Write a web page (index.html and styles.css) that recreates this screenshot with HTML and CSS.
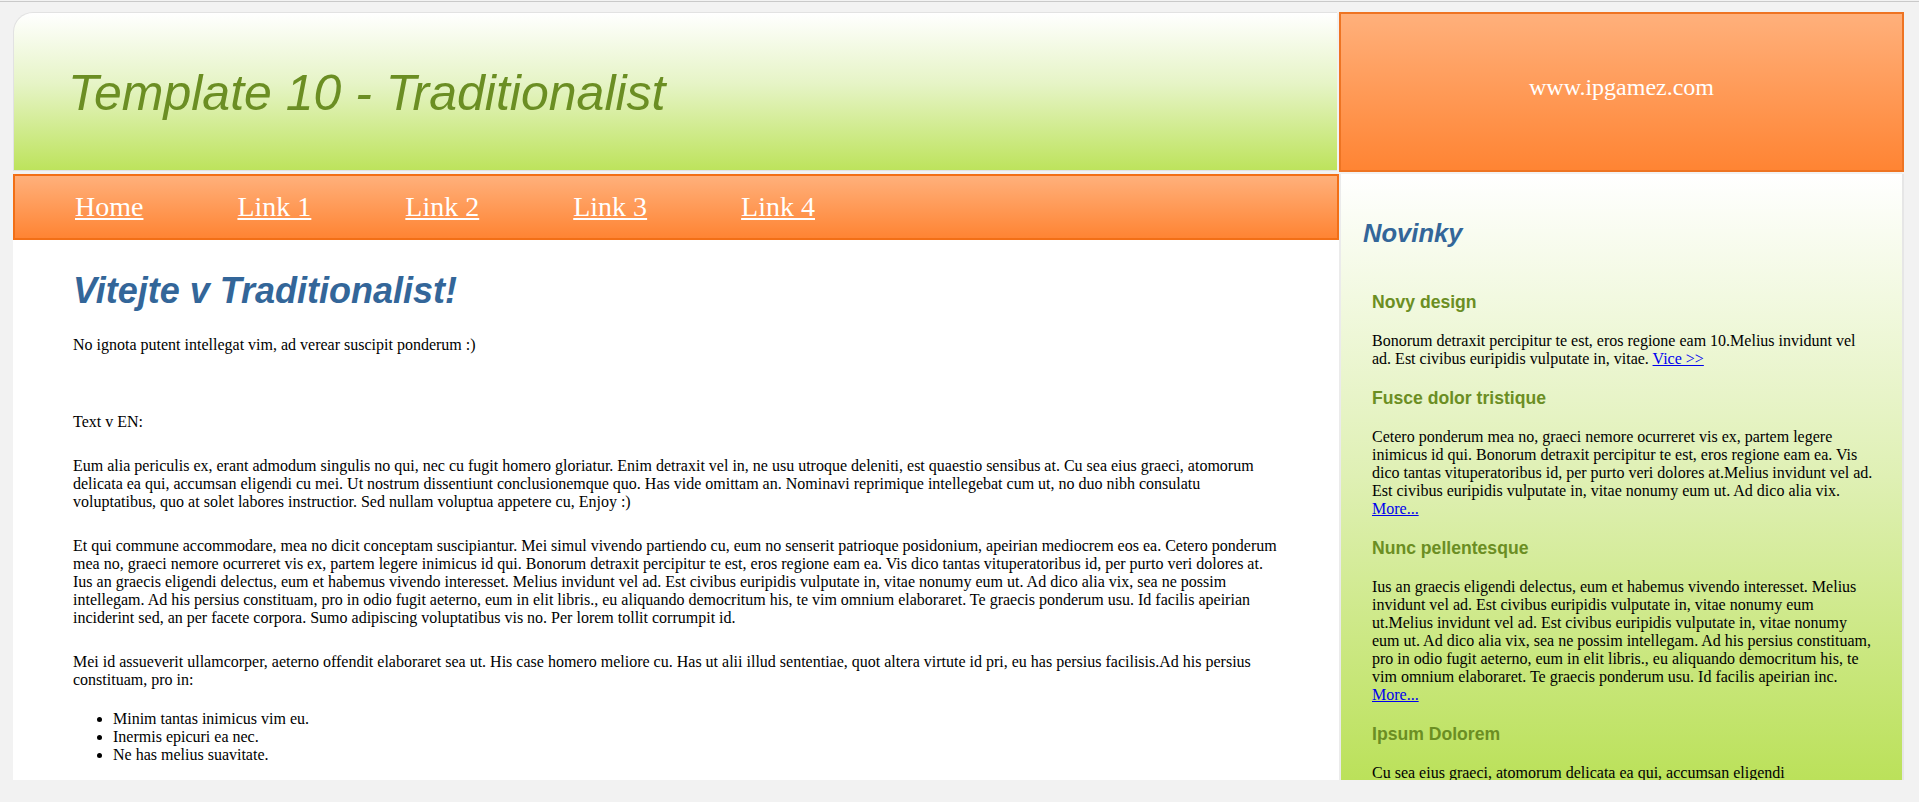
FILE: index.html
```html
<!DOCTYPE html>
<html lang="cs">
<head>
<meta charset="utf-8">
<title>Template 10 - Traditionalist</title>
<link rel="stylesheet" href="styles.css">
</head>
<body>
<div class="frame">
  <div class="page">
    <div class="top">
      <div class="header"><h1 class="site-title">Template 10 - Traditionalist</h1></div>
      <div class="sitebox">www.ipgamez.com</div>
    </div>
    <div class="bottom">
      <div class="left">
        <nav class="nav">
          <a href="#">Home</a>
          <a href="#">Link 1</a>
          <a href="#">Link 2</a>
          <a href="#">Link 3</a>
          <a href="#">Link 4</a>
        </nav>
        <div class="main">
          <h2 class="welcome">Vitejte v Traditionalist!</h2>
          <p class="intro">No ignota putent intellegat vim, ad verear suscipit ponderum :)</p>
          <p>Text v EN:</p>
          <p>Eum alia periculis ex, erant admodum singulis no qui, nec cu fugit homero gloriatur. Enim detraxit vel in, ne usu utroque deleniti, est quaestio sensibus at. Cu sea eius graeci, atomorum<br>delicata ea qui, accumsan eligendi cu mei. Ut nostrum dissentiunt conclusionemque quo. Has vide omittam an. Nominavi reprimique intellegebat cum ut, no duo nibh consulatu<br>voluptatibus, quo at solet labores instructior. Sed nullam voluptua appetere cu, Enjoy :)</p>
          <p>Et qui commune accommodare, mea no dicit conceptam suscipiantur. Mei simul vivendo partiendo cu, eum no senserit patrioque posidonium, apeirian mediocrem eos ea. Cetero ponderum<br>mea no, graeci nemore ocurreret vis ex, partem legere inimicus id qui. Bonorum detraxit percipitur te est, eros regione eam ea. Vis dico tantas vituperatoribus id, per purto veri dolores at.<br>Ius an graecis eligendi delectus, eum et habemus vivendo interesset. Melius invidunt vel ad. Est civibus euripidis vulputate in, vitae nonumy eum ut. Ad dico alia vix, sea ne possim<br>intellegam. Ad his persius constituam, pro in odio fugit aeterno, eum in elit libris., eu aliquando democritum his, te vim omnium elaboraret. Te graecis ponderum usu. Id facilis apeirian<br>inciderint sed, an per facete corpora. Sumo adipiscing voluptatibus vis no. Per lorem tollit corrumpit id.</p>
          <p class="lead-in">Mei id assueverit ullamcorper, aeterno offendit elaboraret sea ut. His case homero meliore cu. Has ut alii illud sententiae, quot altera virtute id pri, eu has persius facilisis.Ad his persius<br>constituam, pro in:</p>
          <ul class="list">
            <li>Minim tantas inimicus vim eu.</li>
            <li>Inermis epicuri ea nec.</li>
            <li>Ne has melius suavitate.</li>
          </ul>
        </div>
      </div>
      <aside class="sidebar">
        <h2 class="side-title">Novinky</h2>
        <div class="news">
          <h3>Novy design</h3>
          <p>Bonorum detraxit percipitur te est, eros regione eam 10.Melius invidunt vel ad. Est civibus euripidis vulputate in, vitae. <a href="#">Vice &gt;&gt;</a></p>
          <h3>Fusce dolor tristique</h3>
          <p>Cetero ponderum mea no, graeci nemore ocurreret vis ex, partem legere inimicus id qui. Bonorum detraxit percipitur te est, eros regione eam ea. Vis dico tantas vituperatoribus id, per purto veri dolores at.Melius invidunt vel ad. Est civibus euripidis vulputate in, vitae nonumy eum ut. Ad dico alia vix.<br><a href="#">More...</a></p>
          <h3>Nunc pellentesque</h3>
          <p>Ius an graecis eligendi delectus, eum et habemus vivendo interesset. Melius invidunt vel ad. Est civibus euripidis vulputate in, vitae nonumy eum ut.Melius invidunt vel ad. Est civibus euripidis vulputate in, vitae nonumy eum ut. Ad dico alia vix, sea ne possim intellegam. Ad his persius constituam, pro in odio fugit aeterno, eum in elit libris., eu aliquando democritum his, te vim omnium elaboraret. Te graecis ponderum usu. Id facilis apeirian inc.<br><a href="#">More...</a></p>
          <h3>Ipsum Dolorem</h3>
          <p>Cu sea eius graeci, atomorum delicata ea qui, accumsan eligendi<br>cu mei. Ut nostrum dissentiunt conclusionemque quo. Has vide omittam an.</p>
        </div>
      </aside>
    </div>
  </div>
</div>
</body>
</html>
```
FILE: styles.css
```css
html, body {
  margin: 0;
  padding: 0;
  background: #f2f2f2;
}
body {
  padding-top: 1px;
  font-family: "Liberation Serif", "Times New Roman", serif;
  font-size: 16px;
  color: #000;
}
.frame {
  border-top: 1px solid #c9c9c9;
  padding: 10px 15px 0 13px;
}
.page {
  width: 1891px;
}
.top {
  display: flex;
  height: 160px;
}
.header {
  box-sizing: border-box;
  width: 1324px;
  height: 159px;
  margin-right: 2px;
  border: 1px solid #e2e2e2;
  border-right: none;
  border-radius: 20px 0 0 0;
  background: linear-gradient(to bottom, #ffffff 0%, #e6f4c6 45%, #bde35c 100%);
  padding: 52px 0 0 54px;
}
.site-title {
  margin: 0;
  font-family: "Liberation Sans", Arial, sans-serif;
  font-size: 50px;
  line-height: 57px;
  font-weight: normal;
  font-style: italic;
  color: #6b8e23;
}
.sitebox {
  box-sizing: border-box;
  width: 565px;
  height: 160px;
  border: 2px solid #ee7423;
  background: linear-gradient(to bottom, #ffb07b 0%, #ff8433 100%);
  color: #fff;
  font-size: 24px;
  line-height: 28px;
  text-align: center;
  padding-top: 59px;
}
.bottom {
  display: flex;
  margin-top: 2px;
  height: 606px;
}
.left {
  width: 1326px;
  display: flex;
  flex-direction: column;
}
.nav {
  box-sizing: border-box;
  height: 66px;
  border: 2px solid #f26f16;
  background: linear-gradient(to bottom, #ffb07b 0%, #ff8433 100%);
  display: flex;
  gap: 94px;
  padding: 15px 0 0 60px;
  line-height: 32px;
}
.nav a {
  color: #fff;
  font-size: 28px;
  text-decoration: underline;
}
.main {
  flex: 1;
  background: #fff;
  padding: 30px 36px 0 60px;
  overflow: hidden;
}
.welcome {
  margin: 0 0 25px;
  font-family: "Liberation Sans", Arial, sans-serif;
  font-size: 36px;
  line-height: 41px;
  font-weight: bold;
  font-style: italic;
  color: #336699;
}
.main p {
  margin: 0 0 26px;
  line-height: 18px;
}
.main p.intro {
  margin-bottom: 59px;
}
.main p.lead-in {
  margin-bottom: 21px;
}
.list {
  margin: 0;
  padding-left: 40px;
  line-height: 18px;
}
.sidebar {
  box-sizing: border-box;
  width: 565px;
  height: 606px;
  overflow: hidden;
  border-left: 2px solid #ebebeb;
  border-right: 2px solid #e6e6e6;
  background: linear-gradient(to bottom, #ffffff 0%, #dff0b4 50%, #bbe15a 100%);
  padding: 45px 27px 0 22px;
}
.side-title {
  margin: 0 0 44px;
  font-family: "Liberation Sans", Arial, sans-serif;
  font-size: 25.6px;
  line-height: 29px;
  font-weight: bold;
  font-style: italic;
  color: #336699;
}
.news {
  padding-left: 9px;
}
.news h3 {
  margin: 0 0 20px;
  font-family: "Liberation Sans", Arial, sans-serif;
  font-size: 17.6px;
  line-height: 20px;
  font-weight: bold;
  color: #6b8e23;
}
.news p {
  margin: 0 0 20px;
  line-height: 18px;
}
.news a {
  color: #0000ee;
}
```
